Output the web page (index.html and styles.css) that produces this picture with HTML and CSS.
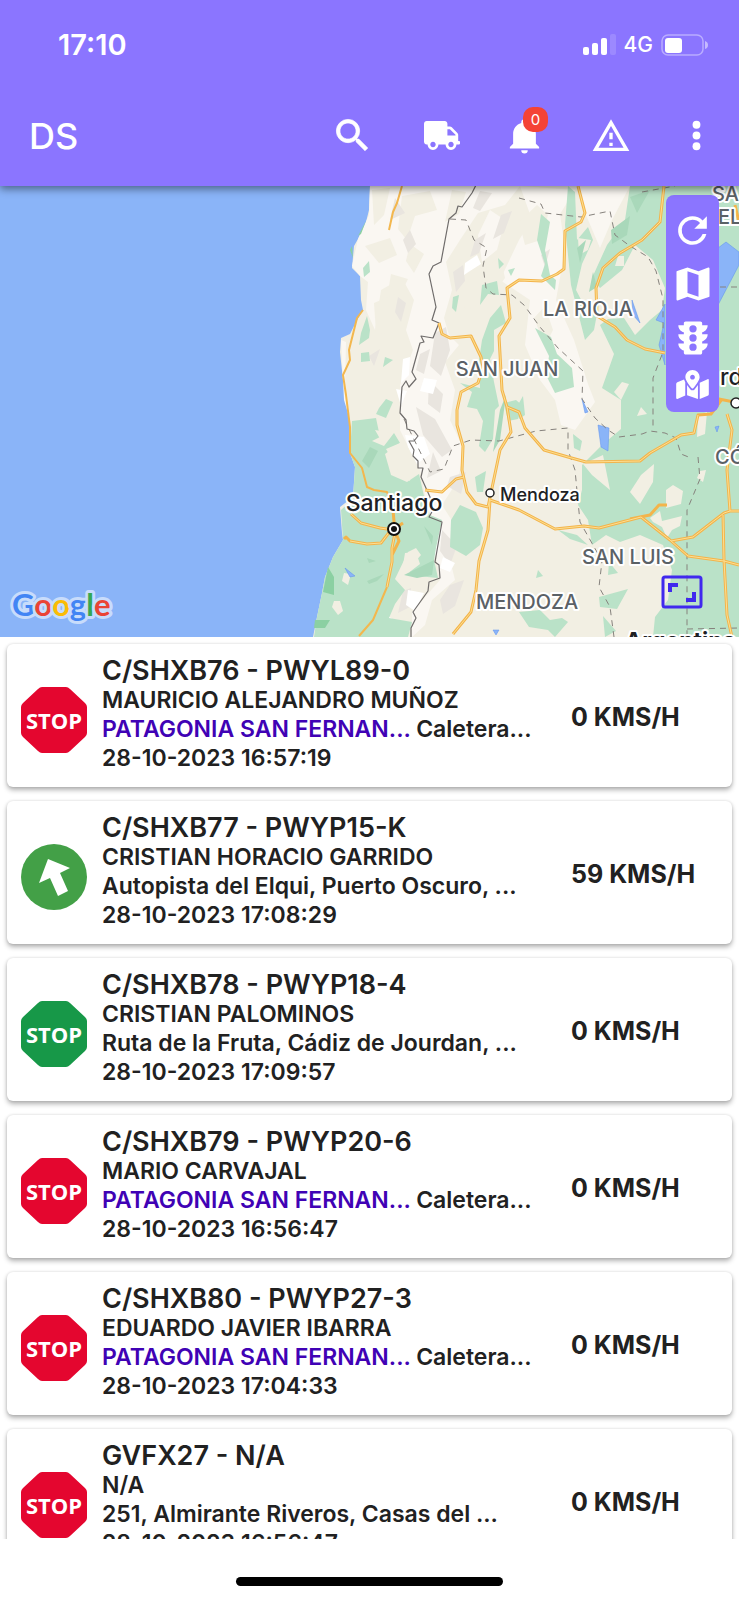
FILE: index.html
```
<!DOCTYPE html>
<html lang="es">
<head>
<meta charset="utf-8">
<meta name="viewport" content="width=device-width, initial-scale=1">
<title>DS</title>
<link rel="stylesheet" href="styles.css">
</head>
<body>
<svg class="defs" aria-hidden="true">
  <symbol id="stop" viewBox="0 0 66 66">
    <path d="M21 0h24q2 0 4 2l15 14q2 2 2 4v26q0 2-2 4L49 64q-2 2-4 2H21q-2 0-4-2L2 50q-2-2-2-4V20q0-2 2-4L17 2q2-2 4-2z" fill="currentColor"/>
    <text class="stop-text" x="33" y="42" text-anchor="middle">STOP</text>
  </symbol>
</svg>
<div class="screen">
  <header class="header">
    <div class="status">
      <span class="time">17:10</span>
      <div class="status-right">
        <svg width="34" height="22" viewBox="0 0 34 22" fill="#fff"><rect x="1" y="13" width="6" height="8" rx="2"/><rect x="10" y="9" width="6" height="12" rx="2"/><rect x="19" y="4" width="6" height="17" rx="2"/><rect x="28" y="0" width="6" height="21" rx="2" opacity=".15"/></svg>
        <span class="network">4G</span>
        <svg width="48" height="22" viewBox="0 0 48 22" fill="#fff"><rect x="1" y="1" width="41" height="20" rx="6" fill="none" stroke="#fff" stroke-width="1.5" opacity=".4"/><rect x="4" y="4" width="17" height="15" rx="3"/><path d="M44 7q3 1 3 4t-3 4z" opacity=".5"/></svg>
      </div>
    </div>
    <nav class="toolbar">
      <h1 class="brand">DS</h1>
      <div class="actions">
        <button class="action" aria-label="Buscar"><svg width="43" height="43" viewBox="0 0 24 24"><path d="M15.5 14h-.79l-.28-.27A6.47 6.47 0 0 0 16 9.5 6.5 6.5 0 1 0 9.5 16c1.61 0 3.09-.59 4.23-1.57l.27.28v.79l5 4.99L20.49 19l-4.99-5zm-6 0C7.01 14 5 11.99 5 9.5S7.01 5 9.5 5 14 7.01 14 9.5 11.99 14 9.5 14z" stroke="#fff" stroke-width=".4"/></svg></button>
        <button class="action truck" aria-label="Vehículos"><svg width="36" height="29" viewBox="0 0 640 512"><path d="M624 352h-16V243.900c0-12.700-5.100-24.900-14.100-33.900L494 110.100c-9-9-21.200-14.100-33.900-14.100H416V48c0-26.500-21.500-48-48-48H48C21.500 0 0 21.500 0 48v320c0 26.500 21.500 48 48 48h16c0 53 43 96 96 96s96-43 96-96h128c0 53 43 96 96 96s96-43 96-96h48c8.800 0 16-7.200 16-16v-32c0-8.800-7.200-16-16-16zM160 464c-26.500 0-48-21.500-48-48s21.500-48 48-48 48 21.500 48 48-21.500 48-48 48zm320 0c-26.500 0-48-21.500-48-48s21.500-48 48-48 48 21.500 48 48-21.500 48-48 48zm80-208H416V144h44.100l99.900 99.900V256z"/></svg></button>
        <button class="action" aria-label="Notificaciones"><svg width="39" height="39" viewBox="0 0 24 24"><path d="M21 19v1H3v-1l2-2v-6c0-3.100 2.030-5.830 5-6.710V4a2 2 0 0 1 4 0v.29c2.970.88 5 3.610 5 6.710v6l2 2m-7 2a2 2 0 0 1-4 0"/></svg><span class="badge">0</span></button>
        <button class="action" aria-label="Alertas"><svg width="40" height="40" viewBox="0 0 24 24"><path d="M12 2L1 21h22M12 6l7.530 13H4.470M11 10v4h2v-4m-2 6v2h2v-2"/></svg></button>
        <button class="action" aria-label="Más"><svg width="43" height="43" viewBox="0 0 24 24"><circle cx="12" cy="6" r="2.200"/><circle cx="12" cy="12" r="2.200"/><circle cx="12" cy="18" r="2.200"/></svg></button>
      </div>
    </nav>
  </header>

  <section class="map" aria-label="Mapa">
    <svg class="map-canvas" viewBox="0 186 739 451" preserveAspectRatio="xMidYMid slice">
      <rect y="186" width="739" height="451" fill="#8ab4f8"/>
      <path fill="#f2efe3" d="M370 186L369 210L366 222L358 239L354 246L352 268L360 276L361 300L363 310L356 322L350 334L341 338L340 352L343 380L346 400L350 427V453L355 467L353 497L340 507L342 533L343 540L333 557L325 577L322 593L317 617L313 637H739V186z"/>
      <g fill="#faf7f2">
        <path d="M370 186H520L505 205L478 213L460 240L446 262L452 290L444 318L449 335L459 345L445 362L455 390L450 420L464 450L458 480L442 505L458 530L450 560L455 580L432 600L425 625L412 637V612L440 580L430 520L420 470L400 430V385L413 350L406 330L414 300L402 278L381 290L375 330L366 310L368 282L360 276L352 266L358 239L369 215z"/>
        <path d="M520 186L575 190L560 214L565 250L556 300L574 340L588 384L595 402L575 430L561 425L555 400L540 380L525 345L530 300L515 290L500 280L519 240L532 220z"/>
        <path d="M579 186H630L612 220L600 248L586 215z"/>
        <path d="M341 340L346 342L345 385L350 420L344 400zM490 210L505 220L497 250L482 262L478 235z"/>
      </g>
      <g fill="#f2efe3">
        <path d="M372 190L390 188L384 215L374 225zM402 196L430 191L437 210L415 216L407 240L398 229zM365 246L390 238L397 255L379 263zM374 303L395 294L403 316L390 335L376 332zM410 244L424 254L414 273L406 261zM391 274L408 279L402 291L389 286z"/>
        <path d="M452 190L466 192L459 214L445 222zM461 259L484 270L500 256L505 278L489 300L466 310L453 287zM519 222L537 205L548 215L541 240L525 245zM456 550L470 535L485 550L478 585L462 590zM534 318L545 306L553 330L545 346z"/>
      </g>
      <g fill="#e9e5df">
        <path d="M453 272L463 265L465 281L456 292zM435 333L446 327L450 350L441 376L430 366zM398 297L406 303L401 322L395 312zM410 230L416 244L408 253L403 240zM480 191L492 193L480 211L473 208zM429 380L443 394L440 413L428 404zM416 407L435 419L452 450L442 457L423 435zM450 477L466 472L461 494L447 486zM442 530L457 546L450 565L440 551zM450 585L464 580L455 606L443 614L440 600zM501 215L512 211L504 233L493 239zM475 240L486 233L479 253L470 257z"/>
        <path d="M369 356L380 349L374 366zM395 198L405 213L390 220zM420 354L430 349L424 374L416 370zM433 452L441 471L427 478zM403 591L411 588L410 607L398 613zM541 255L550 249L545 267z"/>
      </g>
      <g fill="#fff">
        <path d="M465 263L477 255L481 264L470 271L464 275zM403 359L410 357L409 375L401 383zM396 389L407 391L401 406zM424 378L437 380L433 394L420 391zM405 435L424 437L430 454L417 464L408 447zM433 522L442 529L438 552L431 562L427 548zM443 557L455 563L450 572L440 568zM408 590L424 593L415 611L406 605zM387 615L401 626L390 627z"/>
      </g>
      <g fill="#bae2c8">
        <path d="M352 421L376 418L380 437L372 441L384 446L394 433L400 443L385 454L391 475L407 482L419 474L424 496L430 515L442 520L436 548L434 560L438 578L417 576L407 571L421 555L416 548L408 552L395 579L405 590L395 604L389 618L412 622L408 637H314L317 617L322 593L325 577L333 557L343 540L341 510L353 499L355 467L350 453z"/>
        <path d="M363 268L369 261L370 272L364 277zM367 316L370 330L369 338L359 345L361 333zM361 353L369 352L370 361L361 362zM385 357L393 360L383 367zM379 408L386 399L393 402L386 418L376 414zM498 258L504 264L499 269zM508 270L515 268L511 276zM482 285L497 281L499 295L488 294L480 305zM453 297L459 295L456 312L452 308z"/>
        <path d="M490 318L501 305L506 323L494 330L494 351L490 359L494 382L499 406L495 410L493 439L485 452L479 446L483 421L477 409L467 407L472 392L460 383L480 388L479 360L482 340zM504 403L516 400L523 406L518 419L508 421zM460 505L476 512L483 528L480 545L466 556L450 547L451 520zM475 477L486 471L483 492L477 492z"/>
        <path d="M541 214L550 222L545 250L550 275L556 280L555 290L541 276L545 264L537 240zM568 186L575 192L577 240L588 227L593 240L582 264L576 290L588 313L600 298L594 330L585 340L571 285L565 225z"/>
        <path d="M630 186H739V637H653L655 617L668 600L672 570L663 545L640 535L620 542L606 535L592 545L588 520L578 505L582 490L582 465L600 447L608 440L621 429V400L602 388L614 354L600 325L608 319L624 318L635 335L650 320L662 310L665 288L653 260L635 245L622 270L600 288L592 278L607 245L625 220z"/>
        <path d="M535 328L551 337L557 354L572 368L574 387L555 393L546 375L549 356zM519 403L523 396L525 415L519 419zM573 434L582 441L580 451L574 448zM558 530L577 535L588 545L570 539zM538 570L543 576L536 578zM519 612L540 610L550 620L562 618L568 622L555 637L548 630L529 627zM609 562L618 573L608 575zM599 597L628 589L617 609L600 607zM603 616L616 631L605 637z"/>
      </g>
      <g fill="#f2efe3">
        <path d="M375 430L392 433L383 444zM386 449L400 443L412 455L410 481L399 472zM641 475L654 464L653 482L640 504L630 492zM583 464L603 455L610 490L592 475zM666 490L673 485L683 491L681 504L666 508zM650 518L660 511L662 521L682 516L680 526L672 530L667 538L662 527L653 522zM622 382L629 384L621 400L614 392zM700 471L706 470L703 482L697 478zM618 256L624 256L624 266L615 266zM405 553L416 552L420 564L407 574L403 565zM344 573L351 574L348 585L342 581zM334 601L340 601L343 611L338 615L332 607zM698 415L707 412L705 434L697 437zM641 407L647 414L637 416zM578 238L591 240L588 250L579 255z"/>
      </g>
      <path fill="#a9d8ba" d="M367 558L376 561L369 563zM367 581L384 574L377 581L369 584zM362 461L370 447L378 451L369 468zM404 575L434 560L432 575L417 578zM611 230L630 216L627 235L612 244zM577 248L586 240L580 263zM500 410L506 395L500 440L493 452zM432 545L424 526L433 536zM630 197L650 190L637 213zM589 292L593 272L597 287z"/>
      <path fill="#8bd0a2" d="M328 567L334 577L334 595L323 592zM315 620L330 620L325 628L314 628zM366 221L361 234L358 236zM352 246L353 258L350 250z"/>
      <g fill="#8ab4f8" stroke="#5c91ed" stroke-width=".5">
        <path d="M726 242L739 252V265L718 305V248zM665 304V365L659 345L664 323L656 320zM582 399L588 412L585 413zM598 425L609 428L608 451L601 447zM632 300L640 323L633 315zM345 568L355 576L350 577zM493 630L499 630L496 635zM715 427L719 426L717 432z"/>
      </g>
      <g fill="none" stroke="#86827d" stroke-width="1" stroke-dasharray="6 5">
        <path d="M450 219L466 220L474 240L487 248L483 266L486 288L493 294L512 295L524 305L540 327L558 348L583 371L582 399L595 418L608 430L619 437L642 434L650 431L665 433L676 438L681 454L691 458"/>
        <path d="M519 198L541 204L545 213L581 217L610 211L615 235L630 246L648 257L656 271L663 299V352L653 378V426"/>
        <path d="M404 419L430 472L444 469L453 446L471 440L499 441L536 431L568 428V450L575 470L580 522L602 561L599 587L610 607L614 637"/>
        <path d="M698 457L700 479L687 510V637M642 192L675 186M720 287H739M687 629L739 628"/>
      </g>
      <path fill="none" stroke="#6f6c6b" stroke-width="1.200" stroke-linejoin="round" d="M476 185L472 193L462 207L458 206L456 213L449 219L441 262L433 266L429 274L436 307L432 320L439 323L433 338L421 336L424 342L420 343L412 372L416 379L409 387L406 381L402 387L400 413L406 420L407 429L414 431L418 436L414 441H409L414 450L413 456L418 461V468H423L421 477L430 497L433 510L429 517L442 522L435 562L439 565L440 578L429 582L428 591L413 612L416 618L411 628V637"/>
      <path fill="none" stroke="#f3b74e" stroke-width="2" stroke-linejoin="round" d="M402 186L397 203L393 212L389 230M363 310L357 318L349 350L350 360L343 375L346 395L350 427V453L362 468L367 487L374 490L387 492L393 510M387 587L373 620L359 636"/>
      <g fill="none" stroke="#f3b44b" stroke-width="3" stroke-linejoin="round">
        <path d="M439 323L442 334L450 338L471 336L481 357L483 367L478 383L461 392L457 410V425L463 446L462 470L467 492L476 504L488 507L500 450L511 432L507 407L502 390L499 336L510 318L507 288L519 280L542 281L557 274L564 269L565 231L581 222L585 213L578 186"/>
        <path d="M664 186L660 222L642 240L620 253L603 268L596 288L597 316L615 327L627 340L645 349L665 353M507 407L519 412L525 428L544 450L568 457L586 462L640 461L650 453L681 435L694 433L698 415L711 414L722 399"/>
        <path d="M425 490L442 492L456 479L464 477M490 500L488 530L479 561L476 590L471 612L453 634M490 500L519 510L555 529L584 526L599 528L641 517L670 540L688 556L724 561L739 565M630 519L650 515L659 505L667 505M671 541L693 537L724 513L730 511H739M723 515L724 560L727 615L732 637M727 414L732 430L727 470L730 511M714 398L739 403M735 205L739 222"/>
        <path d="M394 530L380 528L361 523L351 514M391 530L381 543L367 544L350 541L346 537L344 539M393 510L395 533L392 548V562L387 587M396 535L400 525L403 523M396 533L399 541L392 555"/>
      </g>
      <g fill="none" stroke="#fddf92" stroke-width="1" stroke-linejoin="round">
        <path d="M439 323L442 334L450 338L471 336L481 357L483 367L478 383L461 392L457 410V425L463 446L462 470L467 492L476 504L488 507L500 450L511 432L507 407L502 390L499 336L510 318L507 288L519 280L542 281L557 274L564 269L565 231L581 222L585 213L578 186M664 186L660 222L642 240L620 253L603 268L596 288L597 316L615 327L627 340L645 349L665 353M507 407L519 412L525 428L544 450L568 457L586 462L640 461L650 453L681 435L694 433L698 415M425 490L442 492L456 479L464 477M490 500L488 530L479 561L476 590L471 612L453 634M490 500L519 510L555 529L584 526L599 528L641 517L670 540L688 556L724 561L739 565M671 541L693 537L724 513L730 511H739M723 515L724 560L727 615L732 637M727 414L732 430L727 470L730 511M394 530L380 528L361 523L351 514M391 530L381 543L367 544L350 541M395 533L392 548V562L387 587"/>
      </g>
      <g class="region" text-anchor="middle">
        <text x="588" y="316">LA RIOJA</text>
        <text x="507" y="376">SAN JUAN</text>
        <text x="628" y="564">SAN LUIS</text>
        <text x="527" y="609">MENDOZA</text>
        <text x="712" y="201" text-anchor="start">SA</text>
        <text x="718" y="224" text-anchor="start">EL</text>
        <text x="715" y="464" text-anchor="start">CÓ</text>
      </g>
      <g class="city">
        <text class="city-large" x="394" y="511" text-anchor="middle">Santiago</text>
        <text class="city-small" x="500" y="501">Mendoza</text>
        <text class="city-large" x="720" y="385">rd</text>
        <text class="country" x="625" y="649">Argentina</text>
      </g>
      <circle cx="394" cy="529" r="6" fill="#fff" stroke="#111" stroke-width="2"/><circle cx="394" cy="529" r="3" fill="#111"/>
      <circle cx="490" cy="493" r="4" fill="#fff" stroke="#222" stroke-width="1.500"/>
      <circle cx="736" cy="403" r="5" fill="#fff" stroke="#222" stroke-width="1.500"/>
      <text class="google" x="12" y="616"><tspan fill="#4285f4">G</tspan><tspan fill="#ea4335">o</tspan><tspan fill="#fbbc05">o</tspan><tspan fill="#4285f4">g</tspan><tspan fill="#34a853">l</tspan><tspan fill="#ea4335">e</tspan></text>
    </svg>
    <div class="map-tools">
      <button class="tool" aria-label="Actualizar"><svg width="43" height="43" viewBox="0 0 24 24"><path d="M17.650 6.350A7.958 7.958 0 0 0 12 4a8 8 0 1 0 7.730 10h-2.080A6 6 0 1 1 12 6c1.660 0 3.140.69 4.220 1.780L13 11h7V4z"/></svg></button>
      <button class="tool" aria-label="Tipo de mapa"><svg width="44" height="44" viewBox="0 0 24 24"><path d="M15 19L9 16.890V5L15 7.110M20.500 3C20.440 3 20.390 3 20.340 3L15 5.100L9 3L3.360 4.900C3.150 4.970 3 5.150 3 5.380V20.500C3 20.780 3.220 21 3.500 21C3.560 21 3.610 21 3.660 20.970L9 18.900L15 21L20.640 19.100C20.850 19 21 18.860 21 18.620V3.500C21 3.220 20.780 3 20.500 3"/></svg></button>
      <button class="tool" aria-label="Tráfico"><svg width="44" height="44" viewBox="0 0 24 24"><path d="M20 10h-3V8.860c1.720-.45 3-2 3-3.860h-3V4c0-.55-.45-1-1-1H8c-.55 0-1 .45-1 1v1H4c0 1.860 1.280 3.410 3 3.860V10H4c0 1.860 1.280 3.410 3 3.860V15H4c0 1.860 1.280 3.410 3 3.860V20c0 .55.45 1 1 1h8c.55 0 1-.45 1-1v-1.140c1.720-.45 3-2 3-3.860h-3v-1.140c1.720-.45 3-2 3-3.860zm-8 9a2 2 0 1 1 0-4 2 2 0 0 1 0 4zm0-5a2 2 0 1 1 0-4 2 2 0 0 1 0 4zm0-5a2 2 0 1 1 0-4 2 2 0 0 1 0 4z"/></svg></button>
      <button class="tool" aria-label="Lugares"><svg width="33" height="29" viewBox="0 0 576 512"><path d="M288 0c-69.590 0-126 56.410-126 126 0 56.260 82.350 158.800 113.900 196.020 6.390 7.540 17.820 7.540 24.200 0C331.650 284.800 414 182.260 414 126 414 56.410 357.590 0 288 0zm0 168c-23.200 0-42-18.800-42-42s18.800-42 42-42 42 18.800 42 42-18.800 42-42 42zM20.120 215.950A32.006 32.006 0 0 0 0 245.660v250.320c0 11.320 11.430 19.060 21.940 14.860L160 448V214.920c-8.840-15.980-16.070-31.540-21.250-46.420L20.120 215.950zM288 359.670c-14.070 0-27.380-6.180-36.510-16.960-19.660-23.200-40.570-49.620-59.490-76.720v182l192 64V266c-18.920 27.090-39.820 53.520-59.490 76.720-9.130 10.770-22.440 16.950-36.510 16.950zm266.060-198.510L416 224v288l139.880-55.950A31.996 31.996 0 0 0 576 426.340V176.020c0-11.320-11.430-19.060-21.940-14.860z"/></svg></button>
    </div>
    <button class="expand" aria-label="Ampliar mapa"><svg width="42" height="34" viewBox="0 0 42 34" fill="none" stroke="#4029ee"><rect x="2" y="2" width="38" height="30" rx="2" stroke-width="3"/><path d="M9 17V10H17M25 25H33V17" stroke-width="4"/></svg></button>
  </section>

  <main class="list">
    <article class="card">
      <svg class="sign red" role="img" aria-label="Detenido"><use href="#stop"/></svg>
      <div class="info"><h2>C/SHXB76 - PWYL89-0</h2><p>MAURICIO ALEJANDRO MUÑOZ</p><p><a href="#patagonia">PATAGONIA SAN FERNAN...</a> Caletera...</p><p>28-10-2023 16:57:19</p></div>
      <strong class="speed">0 KMS/H</strong>
    </article>
    <article class="card">
      <svg class="sign" viewBox="0 0 66 66" role="img" aria-label="En movimiento"><circle cx="33" cy="33" r="33" fill="#43a047"/><path d="M27 15L49 24L39 29L47 47L37 52L29 34L18 39z" fill="#fff"/></svg>
      <div class="info"><h2>C/SHXB77 - PWYP15-K</h2><p>CRISTIAN HORACIO GARRIDO</p><p>Autopista del Elqui, Puerto Oscuro, ...</p><p>28-10-2023 17:08:29</p></div>
      <strong class="speed">59 KMS/H</strong>
    </article>
    <article class="card">
      <svg class="sign green" role="img" aria-label="Detenido con motor encendido"><use href="#stop"/></svg>
      <div class="info"><h2>C/SHXB78 - PWYP18-4</h2><p>CRISTIAN PALOMINOS</p><p>Ruta de la Fruta, Cádiz de Jourdan, ...</p><p>28-10-2023 17:09:57</p></div>
      <strong class="speed">0 KMS/H</strong>
    </article>
    <article class="card">
      <svg class="sign red" role="img" aria-label="Detenido"><use href="#stop"/></svg>
      <div class="info"><h2>C/SHXB79 - PWYP20-6</h2><p>MARIO CARVAJAL</p><p><a href="#patagonia">PATAGONIA SAN FERNAN...</a> Caletera...</p><p>28-10-2023 16:56:47</p></div>
      <strong class="speed">0 KMS/H</strong>
    </article>
    <article class="card">
      <svg class="sign red" role="img" aria-label="Detenido"><use href="#stop"/></svg>
      <div class="info"><h2>C/SHXB80 - PWYP27-3</h2><p>EDUARDO JAVIER IBARRA</p><p><a href="#patagonia">PATAGONIA SAN FERNAN...</a> Caletera...</p><p>28-10-2023 17:04:33</p></div>
      <strong class="speed">0 KMS/H</strong>
    </article>
    <article class="card">
      <svg class="sign red" role="img" aria-label="Detenido"><use href="#stop"/></svg>
      <div class="info"><h2>GVFX27 - N/A</h2><p>N/A</p><p>251, Almirante Riveros, Casas del ...</p><p>28-10-2023 16:56:47</p></div>
      <strong class="speed">0 KMS/H</strong>
    </article>
  </main>
  <footer class="home"><span class="home-bar"></span></footer>
</div>
</body>
</html>
```

FILE: styles.css
```
* { box-sizing: border-box; }
body {
  margin: 0;
  background: #fff;
  color: #212121;
  font-family: Inter, "Liberation Sans", sans-serif;
}
h1, h2, p { margin: 0; }
button { padding: 0; border: 0; background: none; color: inherit; font: inherit; }
svg { display: block; }
.defs { position: absolute; width: 0; height: 0; }

.screen { display: flex; flex-direction: column; height: 100vh; overflow: hidden; }

.header {
  position: relative;
  z-index: 1;
  flex: none;
  background: #8b75ff;
  color: #fff;
  box-shadow: 0 3px 8px rgba(0, 0, 0, .45);
}
.status { display: flex; align-items: center; justify-content: space-between; height: 89px; padding: 0 30px 0 58px; }
.time { font-size: 29px; font-weight: 600; }
.status-right { display: flex; align-items: center; gap: 8px; }
.network { font-size: 21px; font-weight: 500; }
.toolbar { display: flex; align-items: center; justify-content: space-between; height: 97px; padding: 0 21px 4px 29px; }
.brand { font-size: 36px; font-weight: 500; }
.actions { display: flex; align-items: center; gap: 43px; }
.action { position: relative; display: grid; place-items: center; width: 43px; height: 43px; fill: #fff; }
.truck { justify-items: end; }
.badge {
  position: absolute;
  top: -7px;
  right: -2px;
  width: 25px;
  height: 25px;
  border-radius: 10px;
  background: #f44336;
  font-size: 15px;
  line-height: 25px;
  text-align: center;
}

.map { position: relative; flex: none; height: 451px; overflow: hidden; }
.map-canvas { width: 100%; height: 100%; }
.map text { paint-order: stroke; stroke: #fff; stroke-width: 4px; stroke-linejoin: round; }
.region { fill: #5b6166; font: 500 20px Inter, sans-serif; }
.city { fill: #202124; font-family: Inter, sans-serif; font-weight: 500; }
.city-large { font-size: 23px; }
.city-small { font-size: 18px; }
.country { font-size: 23px; font-weight: 700; }
.map .google { font: 700 31px Lato, sans-serif; stroke: #c8dcfb; stroke-width: 6px; }
.map-tools {
  position: absolute;
  top: 9px;
  right: 20px;
  display: flex;
  flex-direction: column;
  align-items: center;
  gap: 10px;
  width: 53px;
  padding: 13px 0;
  border-radius: 8px;
  background: #8b75ff;
  fill: #fff;
}
.tool { display: grid; place-items: center; width: 44px; height: 44px; }
.tool:last-child { height: 29px; }
.expand { position: absolute; right: 36px; bottom: 28px; }

.list { flex: 1; min-height: 0; overflow: hidden; display: flex; flex-direction: column; gap: 14px; padding: 7px 7px 0; }
.card {
  flex: none;
  display: grid;
  grid-template-columns: 66px 1fr 161px;
  column-gap: 15px;
  align-items: center;
  padding: 11px 0 14px 14px;
  border-radius: 6px;
  background: #fff;
  box-shadow: 0 3px 5px rgba(0, 0, 0, .3), 0 0 3px rgba(0, 0, 0, .12);
}
.sign { width: 66px; height: 66px; margin-top: 12px; }
.red { color: #e4062f; }
.green { color: #179848; }
.stop-text { font: 700 22px "Open Sans", sans-serif; fill: #fff; }
.info { min-width: 0; white-space: nowrap; font-size: 23px; font-weight: 600; line-height: 29px; }
.info h2 { font-size: 27px; font-weight: 600; line-height: 31px; }
.info a { color: #4002b5; text-decoration: none; }
.speed { margin-top: 6px; font-size: 25px; font-weight: 700; white-space: nowrap; }

.home { flex: none; display: flex; justify-content: center; height: 61px; padding-top: 38px; background: #fff; }
.home-bar { width: 36%; height: 9px; border-radius: 5px; background: #000; }
```
